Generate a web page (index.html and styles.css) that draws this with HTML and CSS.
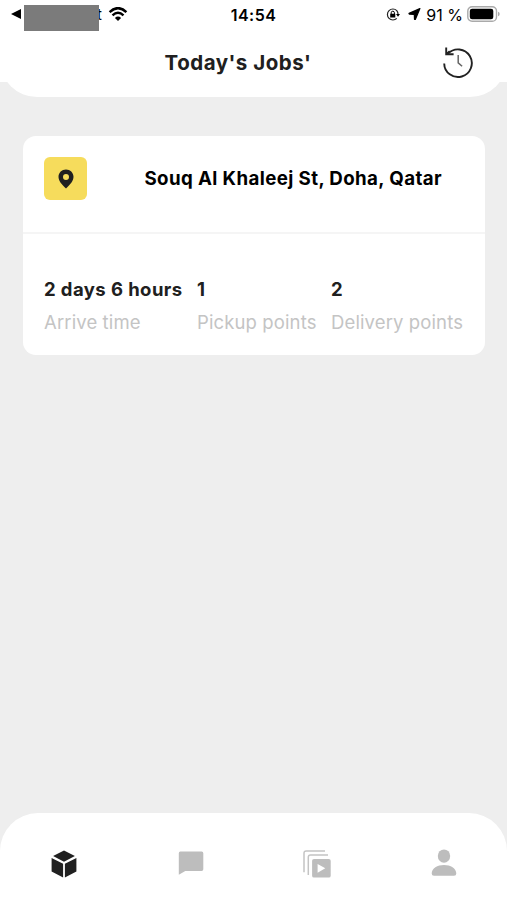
FILE: index.html
```
<!DOCTYPE html>
<html lang="en">
<head>
<meta charset="utf-8">
<meta name="viewport" content="width=device-width, initial-scale=1">
<title>Today's Jobs</title>
<link rel="stylesheet" href="styles.css">
</head>
<body>
<div class="screen">
  <header class="top">
    <div class="top-sheet">
      <div class="status">
        <div class="status-left">
          <svg class="back" width="10" height="10" viewBox="0 0 10 10"><path d="M0 5 10 0v10z"/></svg>
          <span class="app-name">t</span><span class="app-mask"></span>
          <svg class="wifi" width="20" height="14" viewBox="0 0 20 15"><path d="M1 5.400Q10-3 19 5.400M4.100 9Q10 3.500 15.900 9" fill="none" stroke="#000" stroke-width="2.600"/><path d="M6.700 11.700Q10 8.900 13.300 11.700L10 14.900z"/></svg>
        </div>
        <time class="clock">14:54</time>
        <div class="status-right">
          <svg width="14" height="13" viewBox="0 0 14 13"><path d="M10.800 2.600A5.500 5.500 0 1 0 10.800 10.400M10.800 2.600A5.500 5.500 0 0 1 12 6" fill="none" stroke="#222" stroke-width="1.200"/><path d="M10 6h4l-2 2.700zM4.200 5.800h5.100v3.700H4.200z"/><path d="M5.200 6V4.800a1.600 1.600 0 0 1 3.200 0V6" fill="none" stroke="#000"/></svg>
          <svg class="arrow" width="13" height="12" viewBox="0 0 12 12"><path d="M11.400.600.600 5.400q-.3.500.3.700l4.900.4.200 4.700q.4.700.9.100z" stroke="#000" stroke-width="1.200" stroke-linejoin="round"/></svg>
          <span class="percent">91 %</span>
          <svg class="battery" width="33" height="16" viewBox="0 0 33 16"><rect x=".8" y=".8" width="28.700" height="14.400" rx="4.300" fill="none" stroke="#aaa" stroke-width="1.400"/><rect x="2.800" y="2.800" width="23.500" height="10.400" rx="2.300"/><path d="M31 5.700q1.700.5 1.700 2.300T31 10.300z" fill="#aaa"/></svg>
        </div>
      </div>
      <div class="title-row">
        <h1>Today's Jobs'</h1>
        <svg class="history" width="32" height="32" viewBox="0 0 32 32" fill="none" stroke="#222"><path d="M2.200 16.400A13.800 13.800 0 1 0 6 6.700" stroke-width="1.900"/><path d="M4.200.6v6.700h7.400M4.200 7.300l3.500-3" stroke-width="1.900"/><path d="M16.200 8v7.900l3.900 3.400" stroke="#666" stroke-width="1.500"/></svg>
      </div>
    </div>
  </header>
  <main>
    <article class="card">
      <div class="place">
        <span class="pin"><svg width="16" height="20" viewBox="0 0 16 20"><path fill-rule="evenodd" d="M8 .5C3.800.5.5 3.600.5 7.800c0 4 3.200 7.800 7.500 11.600 4.300-3.800 7.500-7.600 7.500-11.600C15.500 3.600 12.200.5 8 .5zM8 5a3 3 0 1 1 0 6 3 3 0 0 1 0-6z" fill="#202020"/></svg></span>
        <h2>Souq Al Khaleej St, Doha, Qatar</h2>
      </div>
      <dl class="stats">
        <div class="stat arrive"><dd>2 days 6 hours</dd><dt>Arrive time</dt></div>
        <div class="stat pickup"><dd>1</dd><dt>Pickup points</dt></div>
        <div class="stat"><dd>2</dd><dt>Delivery points</dt></div>
      </dl>
    </article>
  </main>
  <nav class="tabs">
    <a><svg width="26" height="28" viewBox="0 0 26 28" fill="#202020"><path d="M13 .4 23.900 6.100 13 11.700 2.100 6.100zM.6 8l11.500 5.700v13.700L.6 21.500zM25.400 8l-11.500 5.700v13.700l11.500-5.900z"/></svg></a>
    <a><svg class="chat" width="26" height="24" viewBox="0 0 26 24" fill="#bdbdbd"><path d="M2.300.5h21.400q1.600 0 1.600 1.700v16q0 1.700-1.700 1.700H7.300L.8 23.700V2.200Q.8.5 2.300.5z"/></svg></a>
    <a><svg width="28" height="28" viewBox="0 0 28 28" fill="none" stroke="#c4c4c4"><path d="M1 22.300V3.200Q1 1 3.300 1H22M5.300 25V7.200Q5.300 5 7.500 5H25" stroke-width="1.500"/><path fill-rule="evenodd" d="M11 8.900h14.800q1.900 0 1.900 1.900v14.900q0 1.900-1.900 1.900H11q-1.900 0-1.900-1.900V10.800q0-1.900 1.900-1.900zm3.600 5v8.800l7.700-4.400z" fill="#bdbdbd" stroke="none"/></svg></a>
    <a><svg class="person" width="26" height="28" viewBox="0 0 26 28" fill="#bdbdbd"><ellipse cx="13" cy="7.100" rx="6.200" ry="6.700"/><path d="M.7 24.500C.7 19.300 6.500 16 13 16s12.300 3.300 12.300 8.500q0 2.300-2.300 2.300H3q-2.300 0-2.300-2.300z"/></svg></a>
  </nav>
</div>
</body>
</html>
```
FILE: styles.css
```
* { box-sizing: border-box; }
body { margin: 0; background: #eee; font-family: Inter, "Liberation Sans", sans-serif; color: #202020; }
svg { display: block; flex: none; }
h1, h2, dl, dd, dt { margin: 0; white-space: nowrap; }
.screen { height: 900px; display: flex; flex-direction: column; overflow: hidden; }
.top { height: 82px; background: #fff; }
.top-sheet { height: 97px; background: #fff; border-radius: 0 0 37px 37px; }
.status { height: 30px; display: grid; grid-template-columns: 1fr auto 1fr; color: #000; }
.status-left { display: flex; align-items: flex-start; padding-left: 11px; }
.back { margin-top: 9px; }
.app-mask { order: 1; width: 75px; height: 26px; margin: 5px 0 0 -78px; background: #7b7b7b; }
.app-name { width: 5px; margin: 6px 0 0 76px; font-size: 15px; line-height: 18px; }
.wifi { order: 2; margin: 7px 0 0 9px; }
.clock { padding-top: 5px; font-size: 16px; font-weight: 600; line-height: 20px; letter-spacing: .5px; }
.status-right { display: flex; align-items: center; justify-content: flex-end; height: 28px; padding-right: 7px; }
.arrow { margin-left: 8px; }
.percent { margin-left: 5px; font-size: 16px; line-height: 20px; padding-top: 1px; }
.battery { margin-left: 4px; }
.title-row { display: grid; grid-template-columns: 1fr auto 1fr; padding: 17px 33px 0 0; }
.title-row h1 { grid-column: 2; padding-left: 2px; font-size: 20.5px; font-weight: 650; line-height: 32px; letter-spacing: .5px; }
.history { justify-self: end; }
main { flex: 1; padding: 54px 22px 0 23px; }
.card { height: 219px; border-radius: 13px; background: #fff; }
.place { height: 98px; padding: 21px 43px 0 21px; display: flex; justify-content: space-between; border-bottom: 2px solid #f5f5f5; }
.pin { width: 43px; height: 43px; display: grid; place-items: center; border-radius: 6px; background: #f6dc5c; }
.place h2 { font-size: 18.7px; font-weight: 650; line-height: 43px; letter-spacing: .4px; color: #000; }
.stats { display: flex; padding: 43px 0 0 21px; font-size: 18.5px; }
.stat { display: flex; flex-direction: column; gap: 8px; }
.arrive { width: 153px; }
.pickup { width: 134px; }
.stat dd { font-weight: 650; line-height: 25px; letter-spacing: .42px; }
.stat dt { line-height: 24px; letter-spacing: .12px; color: #c4c4c4; }
.tabs { height: 87px; padding-left: 1px; display: grid; grid-template-columns: repeat(4, 1fr); background: #fff; border-radius: 38px 38px 0 0; }
.tabs a { height: 101px; display: grid; place-items: center; }
.chat, .person { margin-bottom: 2px; }
```
